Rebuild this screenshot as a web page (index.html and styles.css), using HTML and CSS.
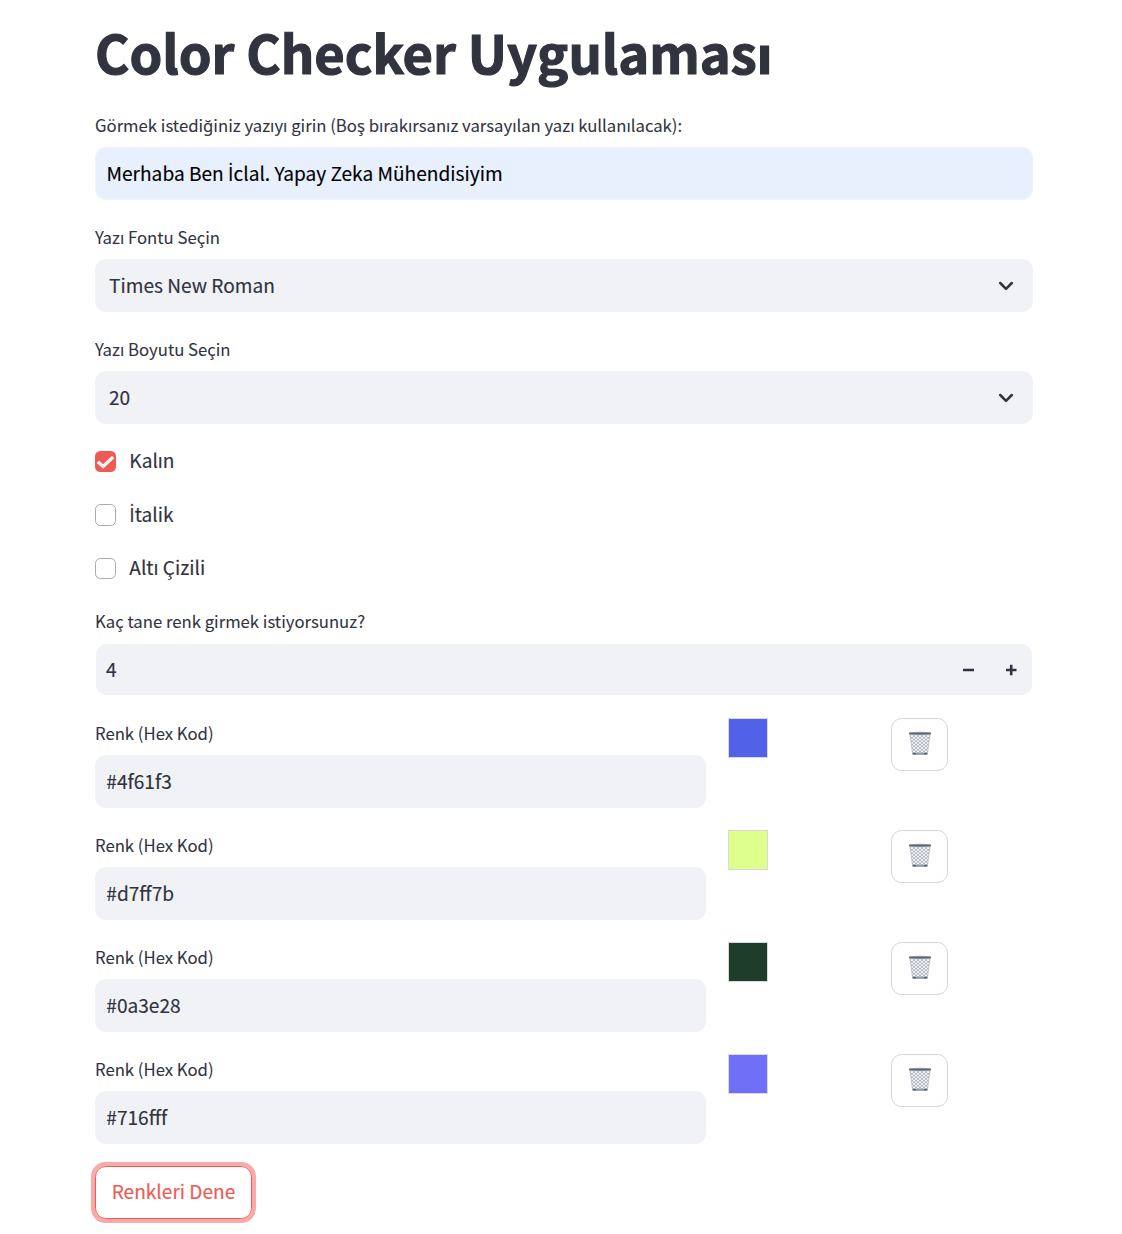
FILE: index.html
```
<!DOCTYPE html>
<html lang="tr">
<head>
<meta charset="utf-8">
<title>Color Checker Uygulaması</title>
<link rel="stylesheet" href="styles.css">
</head>
<body>
<svg width="0" height="0" class="defs" aria-hidden="true">
  <defs>
    <pattern id="mesh" width="4" height="3.4" patternUnits="userSpaceOnUse">
      <path d="M0 0l4 3.4M4 0L0 3.4" stroke="#9aa2ad" stroke-width=".7"/>
    </pattern>
    <symbol id="bin" viewBox="0 0 24 25">
      <path d="M1.8 2h20.4l-2.8 21.4H4.6z" fill="#f4f6f8"/>
      <path d="M1.8 2h20.4l-2.8 21.4H4.6z" fill="url(#mesh)" stroke="#b4bac3" stroke-width=".8"/>
      <path d="M4.3 21.4h15.4l-.3 2q-7.4 1.2-14.8 0z" fill="#93a3b6"/>
      <path d="M5 22.6h3M16 22.6h3" stroke="#4e5d72" stroke-width="1.2"/>
      <path d="M.8 1.2q11.2-.9 22.4 0l-.4 2.3q-10.8.9-21.6 0z" fill="#8a929e"/>
      <path d="M1.6 2.7h20.8" stroke="#565e6c" stroke-width="1"/>
    </symbol>
    <symbol id="chevron" viewBox="0 0 16 10">
      <path d="M2.2 2l5.8 5.8L13.8 2" fill="none" stroke="#31333f" stroke-width="2.5" stroke-linecap="round" stroke-linejoin="round"/>
    </symbol>
  </defs>
</svg>
<main class="page">
  <h1 class="title">Color Checker Uygulaması</h1>
  <div class="widget">
    <div class="label"><span>Görmek istediğiniz yazıyı girin (Boş bırakırsanız varsayılan yazı kullanılacak):</span></div>
    <div class="field autofill"><span>Merhaba Ben <span class="dotted">İ</span>clal. Yapay Zeka Mühendisiyim</span></div>
  </div>
  <div class="widget">
    <div class="label"><span>Yazı Fontu Seçin</span></div>
    <div class="field select"><span>Times New Roman</span><svg class="chevron"><use href="#chevron"/></svg></div>
  </div>
  <div class="widget">
    <div class="label"><span>Yazı Boyutu Seçin</span></div>
    <div class="field select"><span>20</span><svg class="chevron"><use href="#chevron"/></svg></div>
  </div>
  <div class="check"><span class="box checked"><svg viewBox="0 0 21 21"><path d="M2.8 10.6l5.2 4.6 9.9-9.4" fill="none" stroke="#f0f2f6" stroke-width="3.4"/></svg></span><span class="option">Kalın</span></div>
  <div class="check"><span class="box"></span><span class="option"><span class="dotted">İ</span>talik</span></div>
  <div class="check"><span class="box"></span><span class="option">Altı Çizili</span></div>
  <div class="widget">
    <div class="label"><span>Kaç tane renk girmek istiyorsunuz?</span></div>
    <div class="field number"><span>4</span>
      <svg class="stepper" viewBox="0 0 56 14"><path d="M1 7h11M44 7h10.5M49.2 1.7v10.6" fill="none" stroke="#31333f" stroke-width="2.6"/></svg>
    </div>
  </div>
  <div class="color-row">
    <div class="widget"><div class="label"><span>Renk (Hex Kod)</span></div><div class="field"><span>#4f61f3</span></div></div>
    <div class="swatch blue"></div>
    <div class="delete"><svg class="bin"><use href="#bin"/></svg></div>
  </div>
  <div class="color-row">
    <div class="widget"><div class="label"><span>Renk (Hex Kod)</span></div><div class="field"><span>#d7ff7b</span></div></div>
    <div class="swatch lime"></div>
    <div class="delete"><svg class="bin"><use href="#bin"/></svg></div>
  </div>
  <div class="color-row">
    <div class="widget"><div class="label"><span>Renk (Hex Kod)</span></div><div class="field"><span>#0a3e28</span></div></div>
    <div class="swatch green"></div>
    <div class="delete"><svg class="bin"><use href="#bin"/></svg></div>
  </div>
  <div class="color-row">
    <div class="widget"><div class="label"><span>Renk (Hex Kod)</span></div><div class="field"><span>#716fff</span></div></div>
    <div class="swatch violet"></div>
    <div class="delete"><svg class="bin"><use href="#bin"/></svg></div>
  </div>
  <div class="submit"><span>Renkleri Dene</span></div>
</main>
</body>
</html>
```
FILE: styles.css
```
* { box-sizing: border-box; }
body {
  margin: 0;
  background: #fff;
  color: #31333f;
  font-family: "Source Sans Pro", "Noto Sans CJK SC", "Noto Sans", sans-serif;
  font-size: 19.13px;
  line-height: 32px;
  white-space: nowrap;
  -webkit-text-stroke: 0.15px currentColor;
}
.defs { display: block; }
.dotted {
  font-family: "Open Sans", sans-serif;
  font-size: 19.6px;
  line-height: 1;
}
.page {
  display: flex;
  flex-direction: column;
  gap: 21.33px;
  width: 938px;
  height: 1234px;
  margin-left: 95px;
  padding-top: 18px;
}
.page > * { flex: none; }
.title {
  height: 70.67px;
  margin: 0;
  font-size: 52.45px;
  line-height: 66.67px;
  font-weight: 700;
  -webkit-text-stroke: 1.2px currentColor;
}
.widget { height: 90.67px; }
.label {
  height: 37.33px;
  font-size: 16.72px;
  line-height: 30px;
  -webkit-text-stroke: 0.08px currentColor;
}
.field {
  display: flex;
  align-items: center;
  height: 52.67px;
  padding: 0 11.3px 2px;
  border-radius: 10.67px;
  background: #f0f2f6;
}
.autofill {
  background: #e8f0fe;
  border: 1px solid #f0f2f6;
  padding: 0 10.5px 2px;
  color: #000;
}
.select {
  justify-content: space-between;
  padding: 0 19px 2px 14px;
}
.chevron { width: 16px; height: 10px; margin-top: 2px; }
.number {
  justify-content: space-between;
  margin: 0.7px 1px 0;
  padding: 0 14px 0 10px;
  height: 50.8px;
}
.stepper { width: 56px; height: 14px; margin-top: 1px; }
.check {
  display: flex;
  align-items: center;
  gap: 13px;
  height: 32px;
}
.option { padding-bottom: 3px; }
.box {
  width: 21.33px;
  height: 21.33px;
  margin-bottom: 0.8px;
  border: 1.33px solid #a9abb1;
  border-radius: 5.33px;
}
.box.checked { border: 0; background: #ef5a54; }
.box svg { display: block; width: 100%; height: 100%; }
.color-row {
  display: grid;
  grid-template-columns: 611px 141px 57px;
  column-gap: 22px;
  height: 90.67px;
}
.swatch {
  width: 40px;
  height: 40px;
  border: 1px solid #d9d9dc;
}
.blue { background: #5161e8; }
.lime { background: #dfff8c; }
.green { background: #1e3d2a; }
.violet { background: #706ff7; }
.delete {
  display: flex;
  justify-content: center;
  width: 57px;
  height: 53.33px;
  padding-top: 12px;
  border: 1px solid #d6d6d9;
  border-radius: 10.67px;
}
.bin { width: 24px; height: 25px; }
.submit {
  display: flex;
  align-items: center;
  justify-content: center;
  width: 157px;
  height: 53.33px;
  padding-bottom: 3px;
  border: 1.33px solid #ef5a54;
  border-radius: 10.67px;
  box-shadow: 0 0 0 4px #f7aaa7;
  color: #ef5a54;
}
```
